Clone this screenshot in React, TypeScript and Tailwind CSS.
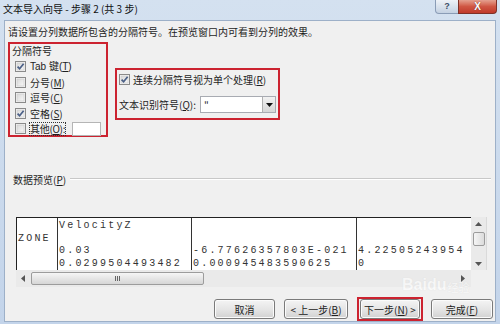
import React from "react";

const CJK = { fontFamily: '"Noto Sans CJK SC", "Noto Sans", sans-serif' };

function Check({ checked }: { checked?: boolean }) {
  return (
    <svg width="11" height="11" viewBox="0 0 11 11" className="shrink-0">
      <defs>
        <linearGradient id="cbg" x1="0" y1="0" x2="1" y2="1">
          <stop offset="0" stopColor="#d9d9d9" />
          <stop offset="1" stopColor="#f7f7f7" />
        </linearGradient>
      </defs>
      <rect x="0.5" y="0.5" width="10" height="10" fill="#f4f4f4" stroke="#8a8a8a" />
      <rect x="2" y="2" width="7" height="7" fill="url(#cbg)" stroke="#c9c9c9" strokeWidth="0.6" />
      {checked && (
        <path d="M2.6 5.6 L4.6 7.8 L8.6 2.8" fill="none" stroke="#4a5f86" strokeWidth="1.7" />
      )}
    </svg>
  );
}

function Btn({ children, w }: { children: React.ReactNode; w: string }) {
  return (
    <div
      className={`${w} h-[20px] rounded-[3px] border border-[#7a7a7a] bg-gradient-to-b from-[#f4f4f4] via-[#e6e6e6] to-[#d2d2d2] flex items-center justify-center text-[10px] text-[#222] whitespace-nowrap shadow-[inset_0_0_0_1px_#fbfbfb]`}
    >
      {children}
    </div>
  );
}

const cols = [
  { w: "w-[41px]", lines: ["", "ZONE", "", ""] },
  { w: "w-[134px]", lines: ["VelocityZ", "", "0.03", "0.0299504493482"] },
  { w: "w-[165px]", lines: ["", "", "-6.77626357803E-021", "0.000945483590625"] },
  { w: "w-[111px]", lines: ["", "", "4.22505243954", "0"] },
];

export default function App() {
  return (
    <div
      className="w-[500px] h-[324px] relative overflow-hidden bg-gradient-to-b from-[#d4e1f0] to-[#c3d4ea] flex flex-col"
      style={CJK}
    >
      {/* title bar */}
      <div className="h-[20px] shrink-0 flex items-center pl-[3px] relative">
        <span className="text-[10px] text-[#111] leading-[14px] mt-[-2px]">文本导入向导 - 步骤 2 (共 3 步)</span>
        <div className="absolute left-[435px] top-0 w-[24px] h-[14px] rounded-bl-[4px] border border-t-0 border-[#8a9cb6] bg-gradient-to-b from-[#eef2f7] to-[#c4d1e2] flex items-center justify-center">
          <span className="text-[9px] leading-none text-[#3c4d66] font-bold" style={{ fontFamily: "Liberation Sans, sans-serif" }}>?</span>
        </div>
        <div className="absolute left-[458px] top-0 w-[39px] h-[14px] rounded-br-[4px] border border-t-0 border-[#7e3027] bg-gradient-to-b from-[#e4a08f] via-[#cf5643] to-[#c0392a] flex items-center justify-center">
          <span className="text-[10px] leading-none text-white font-bold" style={{ fontFamily: "Liberation Sans, sans-serif", textShadow: "0 0 1px #5a1a12" }}>X</span>
        </div>
      </div>

      {/* client */}
      <div className="mx-[4px] w-[492px] h-[302px] bg-[#f0f0f0] border border-[#9db0c8] flex flex-col pl-[3px] text-[#1e1e1e]">
        <div className="mt-[4px] h-[14px] leading-[14px] text-[10px]">
          请设置分列数据所包含的分隔符号。在预览窗口内可看到分列的效果。
        </div>

        <div className="mt-[3px] flex items-start">
          {/* delimiter group */}
          <div className="w-[100px] h-[95px] border-2 border-[#cc2330] flex flex-col text-[10px]">
            <div className="h-[14px] leading-[14px] pl-[2px]">分隔符号</div>
            <div className="mt-[1px] flex flex-col pl-[5px]">
              <div className="h-[15.5px] flex items-center gap-[4px] whitespace-nowrap">
                <Check checked />
                <span style={{ fontFamily: '"Liberation Sans", "Noto Sans CJK SC", sans-serif' }}>Tab 键(<u>T</u>)</span>
              </div>
              <div className="h-[15.5px] flex items-center gap-[4px] whitespace-nowrap">
                <Check />
                <span>分号(<u>M</u>)</span>
              </div>
              <div className="h-[15.5px] flex items-center gap-[4px] whitespace-nowrap">
                <Check />
                <span>逗号(<u>C</u>)</span>
              </div>
              <div className="h-[15.5px] flex items-center gap-[4px] whitespace-nowrap">
                <Check checked />
                <span>空格(<u>S</u>)</span>
              </div>
              <div className="h-[15.5px] flex items-center gap-[3px] whitespace-nowrap">
                <Check />
                <span className="shrink-0 border border-dotted border-[#333] leading-[12px] tracking-[-0.3px]">其他(<u>O</u>):</span>
                <div className="ml-[3px] shrink-0 w-[29px] h-[14px] bg-white border border-[#b5b5b5]" />
              </div>
            </div>
          </div>

          {/* right group */}
          <div className="ml-[7px] mt-[26px] w-[165px] h-[52px] border-2 border-[#cc2330] flex flex-col text-[10px] pl-[2px]">
            <div className="mt-[2px] h-[14px] flex items-center gap-[3px] whitespace-nowrap">
              <Check checked />
              <span>连续分隔符号视为单个处理(<u>R</u>)</span>
            </div>
            <div className="mt-[10px] flex items-center whitespace-nowrap">
              <span className="w-[81px]">文本识别符号(<u>Q</u>):</span>
              <div className="w-[76px] h-[17px] bg-white border border-[#a8abb2] flex items-center">
                <span className="flex-1 pl-[3px] text-[10px] leading-none">"</span>
                <div className="w-[13px] h-[15px] border-l border-[#b0b0b0] bg-gradient-to-b from-[#f2f2f2] to-[#d6d6d6] flex items-center justify-center">
                  <svg width="7" height="4" viewBox="0 0 7 4"><path d="M0 0 L7 0 L3.5 4 Z" fill="#111" /></svg>
                </div>
              </div>
            </div>
          </div>
        </div>

        {/* data preview label */}
        <div className="mt-[35px] ml-[5px] h-[14px] flex items-center text-[10px]">
          <span>数据预览(<u>P</u>)</span>
          <div className="ml-[4px] flex-1 mr-[4px] h-[2px] border-t border-[#c8c8c8] border-b border-b-white" />
        </div>

        {/* preview */}
        <div className="mt-[31px] ml-[8px] w-[471px] h-[70px] flex flex-col">
          <div className="flex h-[53px]">
            <div
              className="w-[455px] h-[53px] bg-white border-t border-l border-[#222] flex overflow-hidden text-[10px] text-[#333] tracking-[2.2px]"
              style={{ fontFamily: '"Liberation Mono", monospace' }}
            >
              {cols.map((c, i) => (
                <div key={i} className={`${c.w} shrink-0 ${i < 3 ? "border-r border-[#333]" : ""} pt-[1px] pl-[1px] flex flex-col`}>
                  {c.lines.map((l, j) => (
                    <div key={j} className="h-[13px] leading-[13px] whitespace-pre">{l}</div>
                  ))}
                </div>
              ))}
            </div>
            <div className="w-[16px] h-[53px] bg-[#eaeaea] border-r border-[#dadada] flex flex-col items-center">
              <svg className="mt-[5px]" width="7" height="4" viewBox="0 0 7 4"><path d="M0 4 L7 4 L3.5 0 Z" fill="#555" /></svg>
              <div className="mt-[6px] w-[12px] h-[14px] rounded-[2px] border border-[#9c9c9c] bg-gradient-to-r from-[#f5f5f5] to-[#dcdcdc]" />
              <svg className="mt-[16px]" width="7" height="4" viewBox="0 0 7 4"><path d="M0 0 L7 0 L3.5 4 Z" fill="#555" /></svg>
            </div>
          </div>
          <div className="flex h-[17px]">
            <div className="w-[455px] h-[17px] bg-[#eaeaea] flex items-center">
              <svg className="ml-[5px]" width="4" height="7" viewBox="0 0 4 7"><path d="M4 0 L4 7 L0 3.5 Z" fill="#555" /></svg>
              <div className="ml-[6px] w-[173px] h-[13px] rounded-[2px] border border-[#9c9c9c] bg-gradient-to-b from-[#f6f6f6] to-[#d6d6d6] flex items-center justify-center">
                <div className="flex gap-[1px]">
                  <div className="w-[1px] h-[5px] bg-[#666]" />
                  <div className="w-[1px] h-[5px] bg-[#666]" />
                  <div className="w-[1px] h-[5px] bg-[#666]" />
                </div>
              </div>
              <div className="flex-1" />
              <svg className="mr-[6px]" width="4" height="7" viewBox="0 0 4 7"><path d="M0 0 L0 7 L4 3.5 Z" fill="#555" /></svg>
            </div>
            <div className="w-[16px] h-[17px] bg-[#f0f0f0]" />
          </div>
        </div>

        {/* buttons */}
        <div className="mt-[10px] flex items-center pl-[206px] h-[24px]">
          <Btn w="w-[61px]">取消</Btn>
          <div className="ml-[9px]">
            <Btn w="w-[64px]">&lt; 上一步(<u>B</u>)</Btn>
          </div>
          <div className="ml-[9px] w-[66px] h-[24px] border-2 border-[#cc2330] flex items-center justify-center">
            <Btn w="w-[60px]">下一步(<u>N</u>) &gt;</Btn>
          </div>
          <div className="ml-[8px]">
            <Btn w="w-[62px]">完成(<u>F</u>)</Btn>
          </div>
        </div>
      </div>

      {/* watermark */}
      <div className="absolute left-[402px] top-[277px] flex items-end opacity-60 pointer-events-none">
        <span className="text-[16px] font-bold text-white leading-none" style={{ fontFamily: '"Liberation Sans", sans-serif', textShadow: "0 0 1px #d0d0d0" }}>Baidu</span>
        <span className="text-[11px] text-white leading-none ml-[1px]" style={{ textShadow: "0 0 1px #d0d0d0" }}>经验</span>
      </div>
    </div>
  );
}
